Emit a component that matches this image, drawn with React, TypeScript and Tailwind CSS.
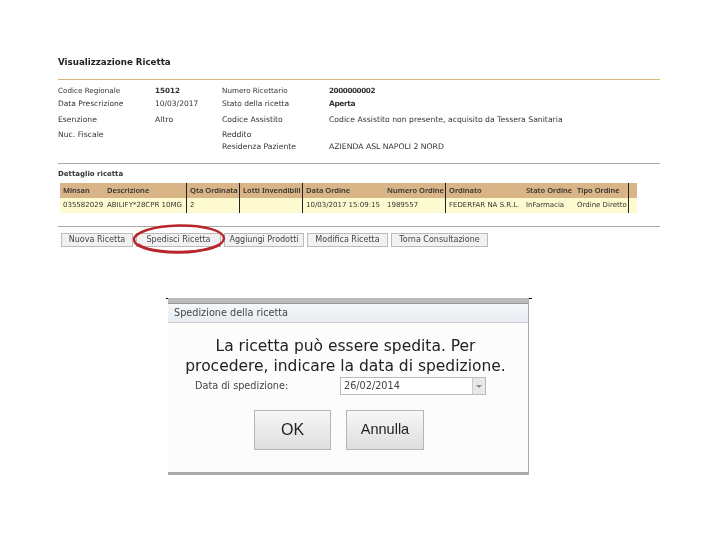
const infoRows = [
  { h: "h-[13px]", size: "text-[7.2px]", a: "Codice Regionale", b: "15012", c: "Numero Ricettario", d: "2000000002", bold: true },
  { h: "h-[16px]", size: "text-[7.5px]", a: "Data Prescrizione", b: "10/03/2017", c: "Stato della ricetta", d: "Aperta", boldD: true },
  { h: "h-[15px]", size: "text-[7.7px]", a: "Esenzione", b: "Altro", c: "Codice Assistito", d: "Codice Assistito non presente, acquisito da Tessera Sanitaria" },
  { h: "h-[12px]", size: "text-[7.7px]", a: "Nuc. Fiscale", b: "", c: "Reddito", d: "" },
  { h: "h-[12px]", size: "text-[7.7px]", a: "", b: "", c: "Residenza Paziente", d: "AZIENDA ASL NAPOLI 2 NORD" },
];

const columns = [
  { label: "Minsan", value: "035582029", w: "w-[44px]", line: false },
  { label: "Descrizione", value: "ABILIFY*28CPR 10MG", w: "w-[83px]", line: true },
  { label: "Qta Ordinata", value: "2", w: "w-[53px]", line: true },
  { label: "Lotti Invendibili", value: "", w: "w-[63px]", line: true },
  { label: "Data Ordine", value: "10/03/2017 15:09:15", w: "w-[81px]", line: false },
  { label: "Numero Ordine", value: "1989557", w: "w-[62px]", line: true },
  { label: "Ordinato", value: "FEDERFAR NA S.R.L.", w: "w-[77px]", line: false },
  { label: "Stato Ordine", value: "InFarmacia", w: "w-[51px]", line: false },
  { label: "Tipo Ordine", value: "Ordine Diretto", w: "w-[55px]", line: true },
  { label: "", value: "", w: "w-[8px]", line: false },
];

const actions = [
  { label: "Nuova Ricetta", w: "w-[72px]" },
  { label: "Spedisci Ricetta", w: "w-[85px]" },
  { label: "Aggiungi Prodotti", w: "w-[80px]" },
  { label: "Modifica Ricetta", w: "w-[81px]" },
  { label: "Torna Consultazione", w: "w-[97px]" },
];

export default function App() {
  return (
    <div className="relative h-[540px] w-[720px] overflow-hidden bg-white pt-[56px] font-['DejaVu_Sans',sans-serif] text-[#333] blur-[0.35px]">
      <div className="ml-[58px] w-[602px]">
        <h1 className="h-[23px] text-[8.7px] leading-[12px] font-bold text-[#222]">Visualizzazione Ricetta</h1>
        <div className="h-px bg-[#d8b878]" />
        <div className="mt-[5px] leading-[12px]">
          {infoRows.map((row) => (
            <div key={row.c} className={`flex ${row.h} ${row.size}`}>
              <span className="w-[97px]">{row.a}</span>
              <span className={`w-[67px] ${row.bold ? "font-bold" : ""}`}>{row.b}</span>
              <span className="w-[107px]">{row.c}</span>
              <span className={row.bold || row.boldD ? "font-bold tracking-[-0.4px]" : ""}>{row.d}</span>
            </div>
          ))}
        </div>
        <div className="mt-[10px] h-px bg-[#aaa]" />
        <div className="mt-[4px] h-[14px] text-[7px] leading-[12px] font-bold">Dettaglio ricetta</div>
        <div className="mt-[1px] ml-[2px] flex w-[577px] flex-col leading-[15px]">
          <div className="flex h-[15px] bg-[#d9b487] font-['Noto_Sans',sans-serif] text-[7.5px] font-semibold">
            {columns.map((col, i) => (
              <div
                key={i}
                className={`${col.w} shrink-0 overflow-hidden pl-[3px] whitespace-nowrap ${col.line ? "border-r border-[#222]" : ""}`}
              >
                {col.label}
              </div>
            ))}
          </div>
          <div className="flex h-[15px] bg-[#fdfacf] text-[7px]">
            {columns.map((col, i) => (
              <div
                key={i}
                className={`${col.w} shrink-0 overflow-hidden pl-[3px] whitespace-nowrap ${col.line ? "border-r border-[#222]" : ""}`}
              >
                {col.value}
              </div>
            ))}
          </div>
        </div>
        <div className="mt-[13px] h-px bg-[#aaa]" />
        <div className="mt-[6px] ml-[3px] flex gap-[3px]">
          {actions.map((a) => (
            <button
              key={a.label}
              className={`${a.w} h-[14px] border border-[#bbb] bg-[#f1f1f1] text-center text-[8px] leading-[12px] whitespace-nowrap text-[#444]`}
            >
              {a.label}
            </button>
          ))}
        </div>
      </div>

      <div className="mt-[51px] ml-[168px] flex h-[177px] w-[361px] flex-col border-r border-[#aaa] bg-[#fcfcfc]">
        <div className="h-[6px] border-b border-[#999] bg-[#bbb]" />
        <div className="flex h-[19px] items-center border-b border-[#ccc] bg-gradient-to-b from-[#f6f8fa] to-[#e6ecf1] pl-[6px] text-[9.7px] text-[#444]">
          Spedizione della ricetta
        </div>
        <div className="flex-1 pt-[13px]">
          <p className="pr-[5px] text-center text-[15.5px] leading-[20px] whitespace-nowrap text-[#222]">
            La ricetta può essere spedita. Per
            <br />
            procedere, indicare la data di spedizione.
          </p>
          <div className="mt-[1px] flex items-center">
            <span className="ml-[27px] w-[145px] text-[9.7px] text-[#444]">Data di spedizione:</span>
            <div className="flex h-[18px] w-[146px] items-center border border-[#bbb] bg-white pl-[3px] text-[9.7px] text-[#444]">
              <span className="flex-1">26/02/2014</span>
              <span className="flex h-full w-[13px] items-center justify-center border-l border-[#ccc] bg-[#e6e9ec]">
                <span className="h-0 w-0 border-x-[3px] border-t-[3px] border-x-transparent border-t-[#888]" />
              </span>
            </div>
          </div>
          <div className="mt-[15px] flex gap-[15px] pl-[86px] font-['Liberation_Sans',sans-serif] text-[#222]">
            <button className="h-[40px] w-[77px] border border-[#b5b5b5] bg-gradient-to-b from-[#f7f7f7] to-[#dedede] text-[16px]">OK</button>
            <button className="h-[40px] w-[78px] border border-[#b5b5b5] bg-gradient-to-b from-[#f7f7f7] to-[#dedede] text-[14.5px]">Annulla</button>
          </div>
        </div>
        <div className="h-[3px] bg-[#aaa]" />
      </div>

      {/* red ellipse drawn over the Spedisci button */}
      <svg className="absolute top-[222px] left-[130px]" width="98" height="34" viewBox="0 0 98 34" fill="none">
        <ellipse cx="49" cy="17" rx="45" ry="13.5" stroke="#b8262b" strokeWidth="2.5" transform="rotate(-1 49 17)" />
        <path d="M8 22 C 20 31, 70 33, 90 23" stroke="#b8262b" strokeWidth="2" />
      </svg>
      <span className="absolute top-[298px] left-[166px] h-px w-[2px] bg-black" />
      <span className="absolute top-[298px] left-[529px] h-px w-[3px] bg-black" />
    </div>
  );
}
